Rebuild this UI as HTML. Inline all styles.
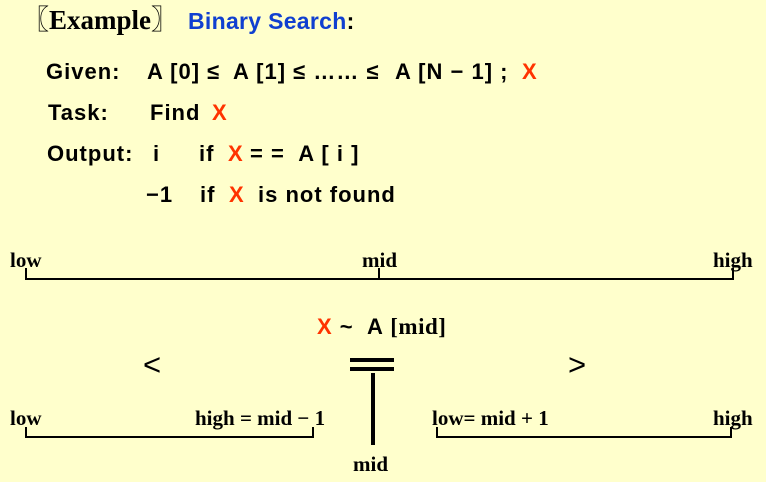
<!DOCTYPE html>
<html><head><style>
body{margin:0;width:766px;height:482px;background:#FFFFCC;position:relative;overflow:hidden;font-family:"Liberation Sans",Arial,sans-serif;color:#000}
.a{position:absolute;white-space:pre;line-height:1}
.s{font-family:"Liberation Sans",sans-serif;font-weight:bold;font-size:22px;letter-spacing:1px}
.r{font-family:"Liberation Serif",serif;font-weight:bold;font-size:21px}
.x{color:#FF3300}
.l{position:absolute;background:#000}
</style></head><body>
<div class="a" style="left:22px;top:7px;font-family:'Liberation Serif','Noto Serif CJK SC',serif;font-weight:bold;font-size:27px">〖Example〗</div>
<div class="a s" style="left:188px;top:10px;color:#1040D0;font-size:23px;letter-spacing:0.3px">Binary Search<span style="color:#000">:</span></div>

<div class="a s" style="left:46px;top:61px">Given:</div>
<div class="a s" style="left:147px;top:61px">A [0] ≤</div>
<div class="a s" style="left:233px;top:61px">A [1] ≤ …… ≤</div>
<div class="a s" style="left:395px;top:61px">A [N − 1] ;</div>
<div class="a s x" style="left:522px;top:61px">X</div>

<div class="a s" style="left:48px;top:102px">Task:</div>
<div class="a s" style="left:150px;top:102px">Find</div>
<div class="a s x" style="left:212px;top:102px">X</div>

<div class="a s" style="left:47px;top:143px">Output:</div>
<div class="a s" style="left:153px;top:143px">i</div>
<div class="a s" style="left:199px;top:143px">if</div>
<div class="a s x" style="left:228px;top:143px">X</div>
<div class="a s" style="left:250px;top:143px">= =  A [ i ]</div>

<div class="a s" style="left:146px;top:184px">−1</div>
<div class="a s" style="left:200px;top:184px">if</div>
<div class="a s x" style="left:229px;top:184px">X</div>
<div class="a s" style="left:258px;top:184px">is not found</div>

<div class="a r" style="left:10px;top:250px">low</div>
<div class="a r" style="left:362px;top:250px">mid</div>
<div class="a r" style="left:713px;top:250px">high</div>
<div class="l" style="left:25px;top:278px;width:709px;height:2px"></div>
<div class="l" style="left:25px;top:268px;width:2px;height:12px"></div>
<div class="l" style="left:378px;top:268px;width:2px;height:12px"></div>
<div class="l" style="left:732px;top:268px;width:2px;height:12px"></div>

<div class="a s" style="left:317px;top:315px;font-size:22px;letter-spacing:1px"><span class="x">X</span> ~  A <span style="font-family:'Liberation Serif',serif;font-size:23px;letter-spacing:0.5px">[mid]</span></div>
<div class="a" style="left:143px;top:349px;font-size:31px">&lt;</div>
<div class="l" style="left:350px;top:358px;width:44px;height:4px"></div>
<div class="l" style="left:350px;top:367px;width:44px;height:4px"></div>
<div class="a" style="left:568px;top:349px;font-size:31px">&gt;</div>
<div class="l" style="left:371px;top:373px;width:4px;height:72px"></div>

<div class="a r" style="left:10px;top:408px">low</div>
<div class="a r" style="left:195px;top:408px">high = mid − 1</div>
<div class="a r" style="left:432px;top:408px">low= mid + 1</div>
<div class="a r" style="left:713px;top:408px">high</div>
<div class="l" style="left:25px;top:436px;width:289px;height:2px"></div>
<div class="l" style="left:25px;top:427px;width:2px;height:11px"></div>
<div class="l" style="left:312px;top:427px;width:2px;height:11px"></div>
<div class="l" style="left:436px;top:436px;width:296px;height:2px"></div>
<div class="l" style="left:436px;top:427px;width:2px;height:11px"></div>
<div class="l" style="left:730px;top:427px;width:2px;height:11px"></div>
<div class="a r" style="left:353px;top:454px">mid</div>
</body></html>
